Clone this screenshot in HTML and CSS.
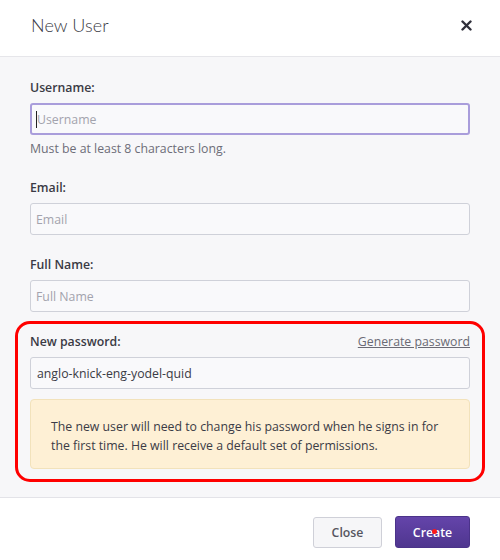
FILE: index.html
```html
<!DOCTYPE html>
<html lang="en">
<head>
<meta charset="utf-8">
<title>New User</title>
<link rel="stylesheet" href="styles.css">
</head>
<body>
<div class="modal">
  <header class="modal-header">
    <h1 class="modal-title">New User</h1>
    <button class="close-x" aria-label="Close">
      <svg width="11" height="11" viewBox="0 0 11 11"><path d="M1.5 1.5 L9.5 9.5 M9.5 1.5 L1.5 9.5" stroke="#2f2f3a" stroke-width="2.4" stroke-linecap="round"/></svg>
    </button>
  </header>
  <div class="modal-body">
    <div class="field">
      <label class="label">Username:</label>
      <div class="input focused"><span class="caret"></span><span class="ph">Username</span></div>
      <div class="hint">Must be at least 8 characters long.</div>
    </div>
    <div class="field">
      <label class="label">Email:</label>
      <div class="input"><span class="ph">Email</span></div>
    </div>
    <div class="field">
      <label class="label">Full Name:</label>
      <div class="input"><span class="ph">Full Name</span></div>
    </div>
    <div class="pw-group">
      <div class="label-row">
        <label class="label">New password:</label>
        <a class="gen-link">Generate password</a>
      </div>
      <div class="input"><span class="val">anglo-knick-eng-yodel-quid</span></div>
      <div class="notice">The new user will need to change his password when he signs in for the first time. He will receive a default set of permissions.</div>
    </div>
  </div>
  <footer class="modal-footer">
    <button class="btn btn-secondary">Close</button>
    <button class="btn btn-primary">Create<span class="marker"></span></button>
  </footer>
</div>
</body>
</html>
```
FILE: styles.css
```css
* { box-sizing: border-box; }
html, body { margin: 0; padding: 0; background: #fff; }
body {
  font-family: "Open Sans", "Noto Sans", "Liberation Sans", sans-serif;
  font-size: 12.3px;
  color: #3b3b45;
  width: 500px;
  height: 560px;
  overflow: hidden;
}
.modal { width: 500px; }
.modal-header {
  height: 57px;
  border-bottom: 1px solid #e6e6ea;
  display: flex;
  align-items: center;
  justify-content: space-between;
  padding: 0 28px 0 31px;
  background: #fff;
}
.modal-title {
  margin: 0;
  font-family: "Lato", sans-serif;
  font-weight: 300;
  font-size: 18px;
  color: #3a3a44;
  letter-spacing: 0.1px;
  position: relative;
  top: -3px;
}
.close-x {
  border: 0; background: none; padding: 0; margin: 0;
  width: 11px; height: 11px; display: flex;
  position: relative; top: -3px;
}
.modal-body {
  background: #f7f7f9;
  padding: 22px 30px 15px;
  border-bottom: 1px solid #e3e3e8;
}
.field { margin-bottom: 21px; }
.field:nth-child(3) { margin-bottom: 9px; }
.label {
  display: block;
  font-weight: 600;
  font-size: 12.3px;
  line-height: 18px;
  color: #3a3a44;
  margin-bottom: 6px;
}
.input {
  height: 32px;
  border: 1px solid #cfd1d9;
  border-radius: 3px;
  background: #f9f9fb;
  display: flex;
  align-items: center;
  padding: 0 5px;
  font-size: 12.3px;
}
.input.focused {
  border: 2px solid #a99ddb;
  padding: 0 4px;
}
.caret {
  width: 1px; height: 17px; background: #222; margin-right: 0;
}
.ph { color: #a3a3ad; }
.val { color: #3b3b45; padding-left: 1px; }
.hint {
  color: #6d6d78;
  line-height: 18px;
  margin-top: 5px;
}
.pw-group {
  margin: 0 -15px;
  border: 3px solid #ff0000;
  border-radius: 15px;
  padding: 9px 12px 10px;
}
.label-row {
  display: flex;
  justify-content: space-between;
  align-items: baseline;
  margin-bottom: 6px;
}
.label-row .label { margin-bottom: 0; }
.gen-link {
  color: #6a6a74;
  text-decoration: underline;
  font-size: 12.3px;
  line-height: 18px;
}
.notice {
  margin-top: 10px;
  background: #fef0d5;
  border: 1px solid #f2e2bb;
  border-radius: 4px;
  padding: 17px 20px 13px;
  line-height: 19px;
  color: #3b3b45;
}
.modal-footer {
  display: flex;
  justify-content: flex-end;
  gap: 13px;
  padding: 18px 30px 0;
  background: #fff;
}
.btn {
  height: 32px;
  border-radius: 3px;
  font-family: "Open Sans", "Noto Sans", sans-serif;
  font-size: 12.3px;
  font-weight: 600;
  padding: 0;
  position: relative;
}
.btn-secondary {
  width: 69px;
  background: #f6f6f8;
  border: 1px solid #cfd0d8;
  color: #55555f;
  margin-top: 1px;
  height: 31px;
}
.btn-primary {
  width: 75px;
  border: 1px solid #4b338a;
  background: linear-gradient(#6444aa, #4f368f);
  color: #fff;
}
.marker {
  position: absolute;
  left: 36px; top: 12px;
  width: 5px; height: 5px;
  border-radius: 50%;
  background: #ff1a1a;
}
```
